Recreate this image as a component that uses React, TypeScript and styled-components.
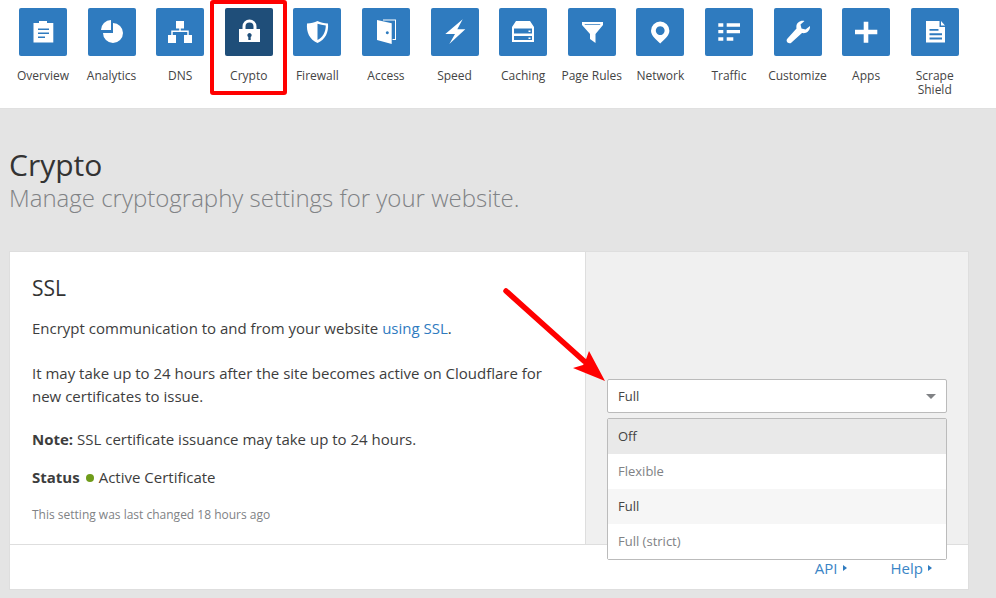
import React from 'react';
import styled, { createGlobalStyle } from 'styled-components';

const GlobalStyle = createGlobalStyle`
  html, body {
    margin: 0;
    padding: 0;
    background: #e4e4e4;
    font-family: 'Open Sans', sans-serif;
    color: #333;
  }
  * { box-sizing: border-box; }
`;

const Page = styled.div`
  position: relative;
  width: 996px;
  height: 598px;
  overflow: hidden;
`;

const Nav = styled.nav`
  display: flex;
  height: 109px;
  padding: 8px 0 0 8.7px;
  background: #fff;
  border-bottom: 1px solid #e0e0e0;
`;

const NavItem = styled.a`
  width: 68.6px;
  display: flex;
  flex-direction: column;
  align-items: center;
  font-size: 12px;
  line-height: 14px;
  text-align: center;
  color: #444;
`;

const Tile = styled.span<{ $active?: boolean }>`
  width: 48px;
  height: 48px;
  margin-bottom: 13px;
  display: flex;
  align-items: center;
  justify-content: center;
  border-radius: 2px;
  background: ${p => (p.$active ? '#1f4e79' : '#2f7bbf')};
`;

const Highlight = styled.div`
  position: absolute;
  left: 210px;
  top: 0;
  width: 77px;
  height: 95px;
  border: 4.5px solid #f00;
  border-radius: 3px;
`;

const Main = styled.main`
  padding: 38px 27px 0 9px;
`;

const Title = styled.h1`
  margin: 0;
  font-size: 30px;
  line-height: 36px;
  font-weight: 400;
  color: #333;
`;

const Subtitle = styled.p`
  margin: 0 0 38px;
  font-size: 24px;
  line-height: 30px;
  font-weight: 300;
  color: #808285;
`;

const Card = styled.section`
  position: relative;
  height: 339px;
  background: #fff;
  border: 1px solid #dedede;
  display: grid;
  grid-template-columns: 575px 1fr;
  grid-template-rows: 292px 1fr;
`;

const Info = styled.div`
  padding: 23px 22px 0;
  font-size: 15px;
  line-height: 23px;
  color: #3d3d3d;
`;

const CardTitle = styled.h2`
  margin: 0 0 15px;
  font-size: 21px;
  line-height: 27px;
  font-weight: 400;
  color: #333;
`;

const Para = styled.p<{ $gap: number }>`
  margin: 0 0 ${p => p.$gap}px;
`;

const Link = styled.a`
  color: #2f7bbf;
`;

const StatusRow = styled.div`
  display: flex;
  align-items: center;
`;

const StatusDot = styled.span`
  width: 8px;
  height: 8px;
  margin: 0 5px 0 6px;
  border-radius: 50%;
  background: #6f9c1a;
`;

const Changed = styled.p`
  margin: 17px 0 0;
  font-size: 12px;
  line-height: 18px;
  color: #808285;
`;

const Control = styled.div`
  position: relative;
  padding: 127px 21px 0;
  background: #f0f0f0;
  border-left: 1px solid #dedede;
`;

const SelectBox = styled.div`
  height: 34px;
  padding: 0 10px;
  display: flex;
  align-items: center;
  justify-content: space-between;
  font-size: 13px;
  color: #444;
  background: #fff;
  border: 1px solid #bbb;
  border-radius: 2px;
`;

const Caret = styled.span`
  width: 0;
  height: 0;
  border-left: 5px solid transparent;
  border-right: 5px solid transparent;
  border-top: 5px solid #808285;
`;

const Menu = styled.ul`
  position: absolute;
  z-index: 2;
  left: 21px;
  right: 21px;
  top: 166px;
  margin: 0;
  padding: 0;
  list-style: none;
  background: #fff;
  border: 1px solid #bbb;
  border-radius: 2px;
`;

const Option = styled.li<{ $bg?: string; $muted?: boolean }>`
  height: 35px;
  padding: 0 0 2px 10px;
  display: flex;
  align-items: center;
  font-size: 13px;
  color: ${p => (p.$muted ? '#808285' : '#444')};
  background: ${p => p.$bg || '#fff'};
`;

const Footer = styled.footer`
  grid-column: 1 / 3;
  padding: 2px 36px 0 0;
  display: flex;
  justify-content: flex-end;
  align-items: center;
  gap: 44px;
  border-top: 1px solid #dedede;
  font-size: 15px;
  line-height: 30px;
`;

const FooterLink = styled.a`
  display: flex;
  align-items: center;
  gap: 5px;
  color: #3a85c6;
`;

const Tick = styled.span`
  border-top: 3.5px solid transparent;
  border-bottom: 3.5px solid transparent;
  border-left: 4px solid #2f7bbf;
`;

const Arrow = styled.svg`
  position: absolute;
  left: 500px;
  top: 285px;
`;

const Icon = ({ children }: { children: React.ReactNode }) => (
  <svg width="24" height="28" viewBox="0 0 24 28" fill="#fff">{children}</svg>
);

const icons: Record<string, React.ReactNode> = {
  Overview: <path fillRule="evenodd" d="M2.500 5H8V3h8v2h6.300v19.500H2.500zM7 10.500v1.600h11v-1.600zm0 4v1.600h11v-1.600zm0 4v1.600h7v-1.600z" />,
  Analytics: (
    <>
      <path d="M11 2v10H1A10 10 0 0 1 11 2z" />
      <path d="M13 5A10 10 0 1 1 3 15h10z" />
    </>
  ),
  DNS: <path d="M8 3h8v7.500h-3.250v2h8v4.500H24v8h-8v-8h3.250v-3h-14.500v3H8v8H0v-8h3.250v-4.500h8v-2H8z" />,
  Crypto: <path fillRule="evenodd" d="M5.500 11V8.500a7 7 0 0 1 14 0V11H23v13H2V11zm3 0h8V8.500a4 4 0 0 0-8 0zm4 4a2.200 2.200 0 0 0-1.200 4V22h2.400v-3a2.200 2.200 0 0 0-1.200-4z" />,
  Firewall: <path fillRule="evenodd" d="M2 5.500C6 5.500 9.500 4.500 12.500 3c3 1.500 6.500 2.500 10.500 2.500 .8 8.500-2.500 16-10.500 19.500C4.500 21.500 1.200 14 2 5.500zM12.500 5.800V22c5-2.500 8.200-7.500 8.300-14.600-3-.2-5.800-.8-8.300-1.600z" />,
  Access: (
    <>
      <path fillRule="evenodd" d="M3 2l14.700 3.300V26L3 22zm10.300 11.200a1.500 1.500 0 1 0 .01 0z" />
      <path d="M9 1.500h13V22h-3.500v-1H21V2.500H9z" />
    </>
  ),
  Speed: <path d="M19.700 1.300L2.300 16H12L6.300 26l16-14.700h-8z" />,
  Caching: <path fillRule="evenodd" d="M5 3h14l4 6v15H1V9zM3 10.500v5h18v-5zm0 7.500v4h18v-4zm14.500-5.500h2v1.500h-2zm0 7h2v1.500h-2z" />,
  'Page Rules': <path fillRule="evenodd" d="M2 4h21v3l-7.500 9v9L10 21v-5L2 7zm2.500 2.200l.5.800h15l.5-.8z" />,
  Network: <path fillRule="evenodd" d="M12.200 3.500a9.200 9.200 0 0 1 9.200 9.200c0 5-5.200 8.800-9.200 12.800C8.200 21.500 3 17.700 3 12.700a9.200 9.200 0 0 1 9.200-9.200zm0 4.700a4.400 4.400 0 1 0 .01 0z" />,
  Traffic: <path d="M1.300 5.300h5v3.400h-5zm8.400 0H23v3.400H9.700zM1.300 12h5v3.300h-5zm8.400 0H23v3.300H9.700zM1.300 19.300h5v3.400h-5zm8.400 0h6.600v3.400H9.700z" />,
  Customize: <path d="M24 8l-4.500 3.500-4-1-1-4 4-3.500c-4.500-1-9 2-8 7.500L1.500 20.500c-1.200 1.200-1.200 3 0 4s2.800 1.200 4 0L16 15c5 1 8.500-3 8-7z" />,
  Apps: <path d="M9.700 3.700h4.600v8H23.300v4.600H14.300v8.400H9.700v-8.400H1v-4.600h8.700z" />,
  'Scrape Shield': <path fillRule="evenodd" d="M3 3h13.500v6H22v15.500H3zM18 3l4 4.500h-4zM6.500 11v1.800h9v-1.800zm0 4.200v2h12.500v-2zm0 4.200v2h12.500v-2z" />,
};

const navItems = [
  'Overview', 'Analytics', 'DNS', 'Crypto', 'Firewall', 'Access', 'Speed',
  'Caching', 'Page Rules', 'Network', 'Traffic', 'Customize', 'Apps', 'Scrape Shield',
];

export default function App() {
  return (
    <Page>
      <GlobalStyle />
      <Nav>
        {navItems.map(label => (
          <NavItem key={label}>
            <Tile $active={label === 'Crypto'}>
              <Icon>{icons[label]}</Icon>
            </Tile>
            {label}
          </NavItem>
        ))}
      </Nav>
      <Highlight />
      <Main>
        <Title>Crypto</Title>
        <Subtitle>Manage cryptography settings for your website.</Subtitle>
        <Card>
          <Info>
            <CardTitle>SSL</CardTitle>
            <Para $gap={22}>Encrypt communication to and from your website <Link>using SSL</Link>.</Para>
            <Para $gap={20}>It may take up to 24 hours after the site becomes active on Cloudflare for new certificates to issue.</Para>
            <Para $gap={15}><strong>Note:</strong> SSL certificate issuance may take up to 24 hours.</Para>
            <StatusRow><strong>Status</strong><StatusDot />Active Certificate</StatusRow>
            <Changed>This setting was last changed 18 hours ago</Changed>
          </Info>
          <Control>
            <SelectBox>Full<Caret /></SelectBox>
            <Menu>
              <Option $bg="#e9e9e9">Off</Option>
              <Option $muted>Flexible</Option>
              <Option $bg="#f6f6f6">Full</Option>
              <Option $muted>Full (strict)</Option>
            </Menu>
          </Control>
          <Footer>
            <FooterLink>API<Tick /></FooterLink>
            <FooterLink>Help<Tick /></FooterLink>
          </Footer>
        </Card>
      </Main>
      <Arrow width="112" height="100" viewBox="0 0 112 100">
        <path d="M6 6L84 76" stroke="#f00" strokeWidth="5.500" strokeLinecap="round" />
        <path d="M105 96L89 66 85 77 83 80 73 83z" fill="#f00" />
      </Arrow>
    </Page>
  );
}
